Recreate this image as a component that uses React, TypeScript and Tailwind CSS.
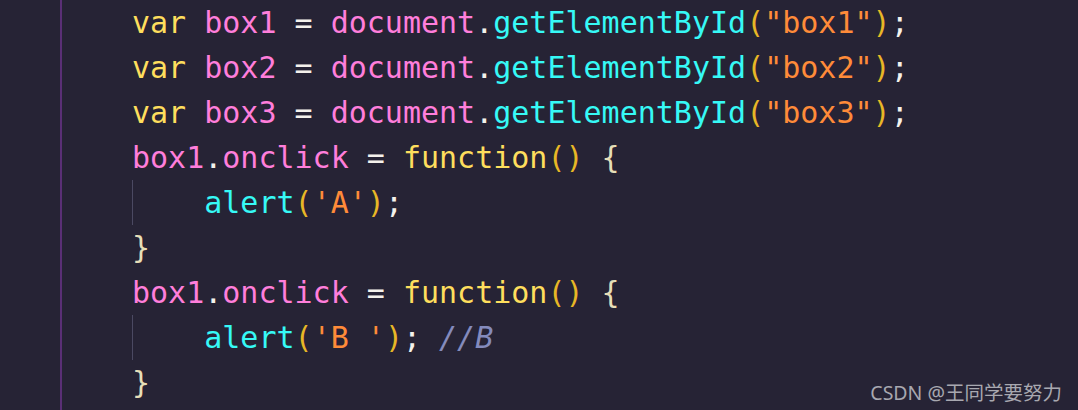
type Tok = [string, string]

const Y = 'text-[#fede5d]'
const P = 'text-[#ff7edb]'
const C = 'text-[#36f9f6]'
const O = 'text-[#ff8b39]'
const W = 'text-[#f4f1ec]'
const G = 'text-[#e8b726]'
const B = 'text-[#e6dfb8]'
const M = 'text-[#848bbd] italic'

const lines: { indent: boolean; toks: Tok[] }[] = [
  { indent: false, toks: [['var', Y], [' box1 ', P], ['=', W], [' document', P], ['.', W], ['getElementById', C], ['(', G], ['"box1"', O], [')', G], [';', W]] },
  { indent: false, toks: [['var', Y], [' box2 ', P], ['=', W], [' document', P], ['.', W], ['getElementById', C], ['(', G], ['"box2"', O], [')', G], [';', W]] },
  { indent: false, toks: [['var', Y], [' box3 ', P], ['=', W], [' document', P], ['.', W], ['getElementById', C], ['(', G], ['"box3"', O], [')', G], [';', W]] },
  { indent: false, toks: [['box1', P], ['.', W], ['onclick ', P], ['=', W], [' function', Y], ['()', G], [' {', B]] },
  { indent: true, toks: [['alert', C], ['(', G], ["'A'", O], [')', G], [';', W]] },
  { indent: false, toks: [['}', B]] },
  { indent: false, toks: [['box1', P], ['.', W], ['onclick ', P], ['=', W], [' function', Y], ['()', G], [' {', B]] },
  { indent: true, toks: [['alert', C], ['(', G], ["'B '", O], [')', G], [';', W], [' ', W], ['//B', M]] },
  { indent: false, toks: [['}', B]] },
]

export default function App() {
  return (
    <div className="relative w-[1078px] h-[410px] overflow-hidden bg-[#262335] flex">
      <div className="w-[60px] shrink-0"></div>
      <div className="w-[2px] shrink-0 bg-[#5a2f76]"></div>
      <div className="pl-[70px] pt-0" style={{ fontFamily: '"DejaVu Sans Mono", monospace' }}>
        {lines.map((l, i) => (
          <div key={i} className="relative h-[45px] leading-[45px] text-[30px] whitespace-pre">
            {l.indent && <div className="absolute left-0 top-0 h-[45px] w-px bg-[#4b4962]"></div>}
            {l.indent && '    '}
            {l.toks.map(([t, c], j) => (
              <span key={j} className={c}>{t}</span>
            ))}
          </div>
        ))}
      </div>
      <div
        className="absolute right-[16px] bottom-[5px] text-[19.5px] leading-[24px] text-[#a8a8b0]"
        style={{ fontFamily: '"Noto Sans", "Noto Sans CJK SC", sans-serif' }}
      >
        CSDN @王同学要努力
      </div>
    </div>
  )
}
